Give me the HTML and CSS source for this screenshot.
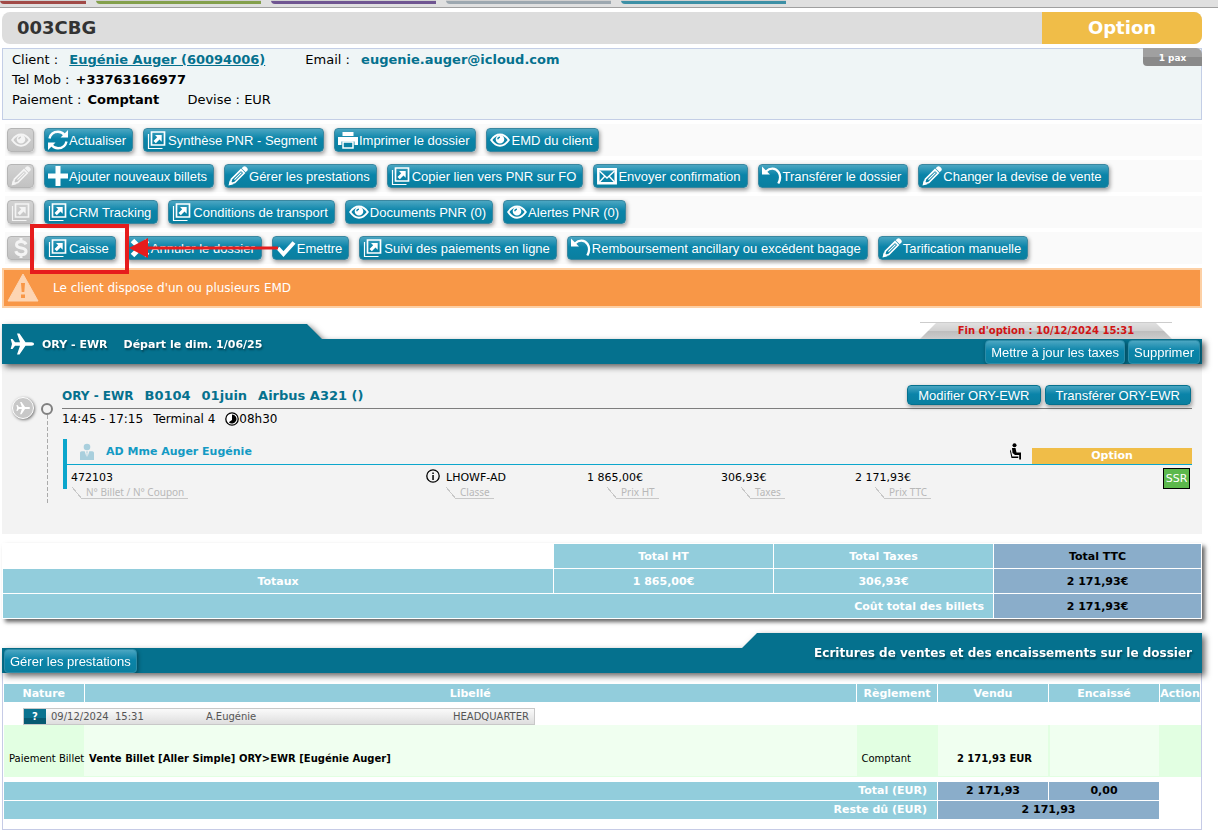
FILE: index.html
```html
<!DOCTYPE html>
<html lang="fr">
<head>
    <meta charset="UTF-8">
    <meta name="viewport" content="width=device-width, initial-scale=1.0">
    <title>Dossier 003CBG</title>
    <link rel="stylesheet" href="styles.css">
</head>
<body>
    <!-- Icones -->
    <svg class="sprite" aria-hidden="true">
        <symbol id="i-eye" viewBox="0 0 20 20">
            <path d="M1.200 10C4 6 7 4.500 10 4.500S16 6 18.800 10C16 14 13 15.800 10 15.800S4 14 1.200 10z" fill="none" stroke="currentColor" stroke-width="2"/>
            <path fill-rule="evenodd" d="M10 5a4.300 4.300 0 1 0 0 8.600A4.300 4.300 0 0 0 10 5zM7.200 9.300A2.800 2.800 0 0 1 10 6.500v1.400a1.400 1.400 0 0 0-1.400 1.400z" fill="currentColor"/>
        </symbol>
        <symbol id="i-refresh" viewBox="0 0 20 20">
            <path d="M1.500 8.500C2.500 4 5.500 1.800 10 1.800c2.800 0 5 1.200 6.500 3.200M18.500 11.500C17.500 16 14.500 18.200 10 18.200c-2.800 0-5-1.200-6.500-3.200" fill="none" stroke="currentColor" stroke-width="2.400"/>
            <path d="M20 0v7.500h-7.500zM0 20v-7.500h7.500z" fill="currentColor"/>
        </symbol>
        <symbol id="i-open" viewBox="0 0 20 20">
            <path d="M4.500 2h13v13h-13z" fill="none" stroke="currentColor" stroke-width="1.700"/>
            <path d="M1.500 4v14.500h14" fill="none" stroke="currentColor" stroke-width="1.200"/>
            <path d="M8 5h6.700v6.700l-2.200-2.200-3.700 3.700L6.500 10.900l3.700-3.700z" fill="currentColor"/>
        </symbol>
        <symbol id="i-print" viewBox="0 0 20 20">
            <path d="M4.500 2h11v4h-11zM0 7h20v8h-3.500v-3.500h-13V15H0z" fill="currentColor"/>
            <path d="M5 12h10v6H5z" fill="none" stroke="currentColor" stroke-width="1.500"/>
        </symbol>
        <symbol id="i-pencil" viewBox="0 0 20 20">
            <path d="M2.200 17.800l1.200-4.600L13 3.800l3.200 3.200-9.400 9.600z" fill="none" stroke="currentColor" stroke-width="1.700"/>
            <path d="M13.700 2.300L15.200.8c.8-.8 2-.8 2.800 0l1.200 1.200c.8.8.8 2 0 2.800l-1.500 1.500zM.5 19.500l1.200-5 3.800 3.800zM6 13.200l7-7 .9.900-7 7z" fill="currentColor"/>
        </symbol>
        <symbol id="i-plus" viewBox="0 0 20 20"><path d="M7.500 0h5v7.500H20v5h-7.500V20h-5v-7.500H0v-5h7.500z" fill="currentColor"/></symbol>
        <symbol id="i-mail" viewBox="0 0 20 20">
            <path d="M1.300 3.300h17.400v14H1.300z" fill="none" stroke="currentColor" stroke-width="2.500"/>
            <path d="M2.500 5l7.500 7 7.500-7M2.500 16l5.500-6M17.500 16L12 10" fill="none" stroke="currentColor" stroke-width="1.400"/>
        </symbol>
        <symbol id="i-undo" viewBox="0 0 20 20">
            <path d="M4 5.500C8 1.500 13.500 1.800 16.500 6c2.200 3.300 2 7.500-.2 11.500" fill="none" stroke="currentColor" stroke-width="2.300"/>
            <path d="M0 .500v8h8z" fill="currentColor"/>
        </symbol>
        <symbol id="i-cross" viewBox="0 0 20 20"><path d="M2.500 2.500l15 15M17.500 2.500l-15 15" stroke="currentColor" stroke-width="5"/></symbol>
        <symbol id="i-check" viewBox="0 0 20 20"><path d="M2 10l5.500 6L18 4.500" fill="none" stroke="currentColor" stroke-width="4"/></symbol>
        <symbol id="i-dollar" viewBox="0 0 20 20">
            <path d="M15 6.300C14 4 12.500 3.500 10 3.500c-3 0-4.500 1.300-4.500 3.200C5.500 11.500 15 8.500 15 13.300c0 2-1.700 3.400-5 3.400-2.700 0-4.500-1-5.200-3.500M10 0v4M10 16.500V20" fill="none" stroke="currentColor" stroke-width="3"/>
        </symbol>
        <symbol id="i-plane" viewBox="0 0 24 24">
            <path d="M24 12c0-1-1-1.700-2.500-1.700h-6L9.500 1.500H7l3 8.800H5L2.500 7H.7L2 12 .7 17h1.800L5 13.700h5l-3 8.800h2.500l6-8.800h6C23 13.700 24 13 24 12z" fill="currentColor"/>
        </symbol>
    </svg>

    <nav class="tabs">
        <a href="#" class="tab tab-red" aria-label="Onglet 1"></a>
        <a href="#" class="tab tab-green" aria-label="Onglet 2"></a>
        <a href="#" class="tab tab-purple" aria-label="Onglet 3"></a>
        <a href="#" class="tab tab-grey" aria-label="Onglet 4"></a>
        <a href="#" class="tab tab-teal" aria-label="Onglet 5"></a>
    </nav>

    <main class="page">
        <header class="title">
            <h1>003CBG</h1>
            <span class="title-status">Option</span>
        </header>

        <section class="client">
            <p>Client : <a href="#">Eugénie Auger (60094006)</a> <span class="client-next">Email : <b class="mail">eugenie.auger@icloud.com</b></span></p>
            <p>Tel Mob : <b class="value">+33763166977</b></p>
            <p>Paiement : <b class="value">Comptant</b> <span class="devise">Devise : EUR</span></p>
            <span class="pax">1 pax</span>
        </section>

        <div class="toolbar">
            <div class="toolbar-row">
                <span class="row-icon"><svg><use href="#i-eye"/></svg></span>
                <button class="btn"><svg><use href="#i-refresh"/></svg>Actualiser</button>
                <button class="btn"><svg><use href="#i-open"/></svg>Synthèse PNR - Segment</button>
                <button class="btn"><svg><use href="#i-print"/></svg>Imprimer le dossier</button>
                <button class="btn"><svg><use href="#i-eye"/></svg>EMD du client</button>
            </div>
            <div class="toolbar-row">
                <span class="row-icon"><svg><use href="#i-pencil"/></svg></span>
                <button class="btn"><svg><use href="#i-plus"/></svg>Ajouter nouveaux billets</button>
                <button class="btn"><svg><use href="#i-pencil"/></svg>Gérer les prestations</button>
                <button class="btn"><svg><use href="#i-open"/></svg>Copier lien vers PNR sur FO</button>
                <button class="btn"><svg><use href="#i-mail"/></svg>Envoyer confirmation</button>
                <button class="btn"><svg><use href="#i-undo"/></svg>Transférer le dossier</button>
                <button class="btn"><svg><use href="#i-pencil"/></svg>Changer la devise de vente</button>
            </div>
            <div class="toolbar-row">
                <span class="row-icon"><svg><use href="#i-open"/></svg></span>
                <button class="btn"><svg><use href="#i-open"/></svg>CRM Tracking</button>
                <button class="btn"><svg><use href="#i-open"/></svg>Conditions de transport</button>
                <button class="btn"><svg><use href="#i-eye"/></svg>Documents PNR (0)</button>
                <button class="btn"><svg><use href="#i-eye"/></svg>Alertes PNR (0)</button>
            </div>
            <div class="toolbar-row">
                <span class="row-icon"><svg><use href="#i-dollar"/></svg></span>
                <button class="btn"><svg><use href="#i-open"/></svg>Caisse</button>
                <button class="btn"><svg><use href="#i-cross"/></svg>Annuler le dossier</button>
                <button class="btn"><svg><use href="#i-check"/></svg>Emettre</button>
                <button class="btn"><svg><use href="#i-open"/></svg>Suivi des paiements en ligne</button>
                <button class="btn"><svg><use href="#i-undo"/></svg>Remboursement ancillary ou excédent bagage</button>
                <button class="btn"><svg><use href="#i-pencil"/></svg>Tarification manuelle</button>
                <!-- Repère rouge autour de Caisse -->
                <svg class="marker" viewBox="0 0 250 54" aria-hidden="true">
                    <path d="M2 3h95v46H2z" fill="none" stroke="#e61c1c" stroke-width="4"/>
                    <path d="M117 25h131" stroke="#e61c1c" stroke-width="3"/>
                    <path d="M99 25l19-10v20z" fill="#e61c1c"/>
                </svg>
            </div>
        </div>

        <div class="alert">
            <svg viewBox="0 0 32 30"><path d="M16 1l15 27H1z" fill="#fdd5b3" stroke="#fdd5b3" stroke-linejoin="round"/><path d="M14 10h4l-.7 9h-2.600zM14 21.500h4v3.500h-4z" fill="#f89747"/></svg>
            Le client dispose d'un ou plusieurs EMD
        </div>

        <section class="segment">
            <div class="band band-left">
                <div class="band-shape">
                    <svg><use href="#i-plane"/></svg>
                    <h2>ORY - EWR</h2>
                    <h2>Départ le dim. 1/06/25</h2>
                    <div class="band-actions">
                        <button class="btn">Mettre à jour les taxes</button>
                        <button class="btn">Supprimer</button>
                    </div>
                </div>
            </div>
            <div class="deadline"><span>Fin d'option : 10/12/2024 15:31</span></div>

            <div class="segment-body">
                <span class="plane-badge"><svg><use href="#i-plane"/></svg></span>
                <div class="timeline"></div>
                <div class="flight">
                    <div class="flight-head">
                        <h3><span class="route">ORY - EWR</span><span>B0104</span><span>01juin</span><span>Airbus A321 ()</span></h3>
                        <button class="btn">Modifier ORY-EWR</button>
                        <button class="btn">Transférer ORY-EWR</button>
                    </div>
                    <p class="flight-times"><span>14:45 - 17:15</span><span>Terminal 4</span><svg viewBox="0 0 14 14"><circle cx="7" cy="7" r="6.200" fill="#fff" stroke="#000" stroke-width="1.300"/><path d="M7 2.500a4.500 4.500 0 1 1-3.200 7.700L7 8z" fill="#000"/></svg>08h30</p>

                    <div class="passenger">
                        <div class="passenger-head">
                            <svg class="person" viewBox="0 0 16 18"><circle cx="8" cy="4" r="3.300"/><path d="M1 10c0-1 .8-1.700 1.700-1.700h3L7.500 14l.2-4-.7-1.500h2L8.300 10l.2 4 1.800-5.700h3c.9 0 1.700.7 1.700 1.700v7H1z"/></svg>
                            <h4>AD Mme Auger Eugénie</h4>
                            <svg class="seat" viewBox="0 0 14 18"><circle cx="4.500" cy="2.200" r="2"/><path d="M2 5h3.500l1 4.500h4.500v7H9.200V12H5L2.500 10zM.6 6.500l1.700 7h6V15H1.500L0 8z"/></svg>
                            <span class="status">Option</span>
                        </div>
                        <div class="ticket">
                            <div class="cell"><span>472103</span><small>N° Billet / N° Coupon</small></div>
                            <div class="cell"><span><svg viewBox="0 0 14 14"><circle cx="7" cy="7" r="6.200" fill="none" stroke="#000" stroke-width="1.300"/><path d="M6.300 3.500h1.500V5H6.300zM6.300 6h1.500v5H6.300z"/></svg>LHOWF-AD</span><small>Classe</small></div>
                            <div class="cell"><span>1 865,00€</span><small>Prix HT</small></div>
                            <div class="cell"><span>306,93€</span><small>Taxes</small></div>
                            <div class="cell"><span>2 171,93€</span><small>Prix TTC</small></div>
                            <button class="ssr">SSR</button>
                        </div>
                    </div>
                </div>
            </div>
        </section>

        <table class="totals">
            <colgroup><col><col class="t-amount"><col class="t-amount"><col class="t-ttc"></colgroup>
            <tr><td class="empty"></td><th>Total HT</th><th>Total Taxes</th><th class="blue">Total TTC</th></tr>
            <tr><th>Totaux</th><td>1 865,00€</td><td>306,93€</td><td class="blue">2 171,93€</td></tr>
            <tr><th colspan="3" class="right">Coût total des billets</th><td class="blue">2 171,93€</td></tr>
        </table>

        <section class="ledger">
            <div class="band band-right">
                <div class="band-shape">
                    <button class="btn">Gérer les prestations</button>
                    <h2>Ecritures de ventes et des encaissements sur le dossier</h2>
                </div>
            </div>
            <div class="ledger-box">
                <table>
                    <colgroup><col class="l-nature"><col><col class="l-mode"><col class="l-amount"><col class="l-amount"><col class="l-action"></colgroup>
                    <thead>
                        <tr><th>Nature</th><th>Libellé</th><th>Règlement</th><th>Vendu</th><th>Encaissé</th><th>Action</th></tr>
                    </thead>
                    <tbody>
                        <tr>
                            <td colspan="6" class="history-cell">
                                <div class="history"><button>?</button><span>09/12/2024 &nbsp;15:31</span><span>A.Eugénie</span><span>HEADQUARTER</span></div>
                            </td>
                        </tr>
                        <tr class="entry">
                            <td class="dark">Paiement Billet</td>
                            <td><b>Vente Billet [Aller Simple] ORY&gt;EWR [Eugénie Auger]</b></td>
                            <td class="dark">Comptant</td>
                            <td class="amount"><b>2 171,93 EUR</b></td>
                            <td class="amount"></td>
                            <td class="dark"></td>
                        </tr>
                    </tbody>
                    <tfoot>
                        <tr class="spacer"><td colspan="6"></td></tr>
                        <tr><th colspan="3" class="right">Total (EUR)</th><td class="blue">2 171,93</td><td class="blue">0,00</td><td></td></tr>
                        <tr><th colspan="3" class="right">Reste dû (EUR)</th><td colspan="2" class="blue">2 171,93</td><td></td></tr>
                    </tfoot>
                </table>
            </div>
        </section>
    </main>
</body>
</html>
```
FILE: styles.css
```css
* {
    box-sizing: border-box;
}

body {
    margin: 0;
    background-color: #fff;
    color: #000;
    font-family: Verdana, "DejaVu Sans", sans-serif;
    font-size: 11px;
}

h1, h2, h3, h4, p {
    margin: 0;
}

button {
    font-family: Arial, "Liberation Sans", sans-serif;
    cursor: pointer;
}

.sprite {
    position: absolute;
    width: 0;
    height: 0;
}

/* Onglets du haut */
.tabs {
    display: flex;
    gap: 10px;
    height: 8px;
    background-color: #e0e0e0;
    border-bottom: 1px solid #a0a0a0;
    overflow: hidden;
}

.tab {
    width: 165px;
    height: 4px;
    border-top: 1px solid #d0d0d0;
    background-color: var(--tab);
    border-bottom-left-radius: 4px;
}

.tab-red { --tab: #a14a47; width: 86px; }
.tab-green { --tab: #84a04c; }
.tab-purple { --tab: #6f5591; }
.tab-grey { --tab: #9da8b0; }
.tab-teal { --tab: #3d90a6; }

.page {
    padding: 4px 16px 4px 2px;
}

.title {
    display: flex;
    height: 32px;
    line-height: 32px;
    background-color: #ddd;
    border-radius: 8px;
    overflow: hidden;
}

.title h1 {
    flex: 1;
    padding-left: 15px;
    font-size: 18px;
    color: #333;
}

.title-status {
    width: 160px;
    background-color: #f0bd48;
    color: #fff;
    font-size: 18px;
    font-weight: bold;
    text-align: center;
}

.client {
    position: relative;
    height: 72px;
    margin-top: 4px;
    padding: 1px 9px;
    border: 1px solid #c3cee6;
    background-color: #eff5f6;
    font-size: 13px;
    line-height: 20px;
}

.client a,
.mail {
    margin-left: 7px;
    color: #05718e;
    font-weight: bold;
}

.client-next {
    margin-left: 36px;
}

.value {
    margin-left: 2px;
}

.devise {
    margin-left: 24px;
}

.pax {
    position: absolute;
    top: -1px;
    right: -1px;
    width: 59px;
    height: 18px;
    border-radius: 0 6px 0 4px;
    background: linear-gradient(#a0a0a0 50%, #8a8a8a 50%);
    color: #fff;
    font-size: 9px;
    font-weight: bold;
    text-align: center;
}

/* Barre d'actions */
.toolbar {
    display: flex;
    flex-direction: column;
    gap: 4px;
    margin: 4px 0 4px 3px;
}

.toolbar-row {
    position: relative;
    display: flex;
    align-items: center;
    gap: 10px;
    height: 32px;
    padding-left: 2px;
    background-color: #fafafa;
}

.btn {
    display: flex;
    align-items: center;
    gap: 1px;
    height: 24px;
    padding: 0 6px 0 3px;
    border: 1px solid #3a87a0;
    border-radius: 4px;
    background: linear-gradient(#4ba6c2, #0a84a9 45%, #0a7f9f);
    box-shadow: 1px 2px 4px rgba(0, 0, 0, 0.4);
    color: #fff;
    font-size: 13px;
    white-space: nowrap;
}

.btn svg,
.row-icon svg {
    width: 20px;
    height: 20px;
    flex: none;
}

.row-icon {
    display: flex;
    align-items: center;
    justify-content: center;
    width: 27px;
    height: 24px;
    border: 1px solid #b5b5b5;
    border-radius: 4px;
    background: linear-gradient(#d2d2d2, #c2c2c2);
    box-shadow: 1px 2px 3px rgba(0, 0, 0, 0.2);
    color: #f4f4f4;
}

.marker {
    position: absolute;
    top: -9px;
    left: 25px;
    width: 250px;
    height: 54px;
}

.alert {
    display: flex;
    align-items: center;
    gap: 14px;
    height: 40px;
    padding-left: 3px;
    border: 2px solid #fdd0a5;
    background-color: #f89747;
    color: #fff;
    font-size: 12px;
}

.alert svg {
    width: 32px;
    height: 30px;
}

/* Bandeaux de section */
.band {
    position: relative;
    z-index: 1;
    filter: drop-shadow(3px 3px 3px rgba(0, 0, 0, 0.6));
}

.band-shape {
    display: flex;
    align-items: center;
    height: 40px;
    background-color: #05718e;
    color: #fff;
}

.band h2 {
    text-shadow: 1px 2px 2px rgba(0, 0, 0, 0.4);
}

.band-left .band-shape {
    gap: 16px;
    padding: 0 2px 0 8px;
    clip-path: polygon(0 0, 305px 0, 320px 15px, 100% 15px, 100% 100%, 0 100%);
}

.band-left svg {
    width: 24px;
    height: 24px;
    margin-right: -8px;
}

.band-left h2 {
    font-size: 11px;
}

.band-actions {
    display: flex;
    align-self: flex-end;
    gap: 3px;
    margin-left: auto;
}

.band .btn {
    padding: 0 5px;
    border-color: #2d8ca8;
}

.deadline {
    position: absolute;
    top: -2px;
    right: 30px;
    z-index: 2;
    width: 252px;
    height: 17px;
    border-top: 1px solid #ccc;
    color: #d01414;
    font-size: 10px;
    font-weight: bold;
    line-height: 16px;
    text-align: center;
}

.deadline span {
    display: block;
    background: linear-gradient(#e0e0e0, #d0d0d0 50%, #bdbdbd 50%, #ccc);
    clip-path: polygon(16px 0, 236px 0, 252px 100%, 0 100%);
}

.segment {
    position: relative;
    margin-top: 16px;
}

.segment-body {
    display: flex;
    height: 170px;
    padding: 18px 10px 0 10px;
    background-color: #f3f3f3;
}

.plane-badge {
    display: flex;
    align-items: center;
    justify-content: center;
    width: 22px;
    height: 22px;
    margin-top: 15px;
    border: 1px solid #fff;
    border-radius: 50%;
    background-color: #c8c8c8;
    box-shadow: 1px 1px 3px rgba(0, 0, 0, 0.5);
    color: #fff;
}

.plane-badge svg {
    width: 14px;
    height: 14px;
}

.timeline {
    width: 12px;
    height: 101px;
    margin: 21px 8px 0 8px;
    background: repeating-linear-gradient(#aaa 0 4px, transparent 4px 6px) no-repeat 5px 12px / 1px 100%;
}

.timeline::before {
    content: "";
    display: block;
    width: 12px;
    height: 12px;
    margin-left: -1px;
    border: 2px solid #808080;
    border-radius: 50%;
}

.timeline,
.timeline::before {
    box-sizing: border-box;
}

.plane-badge,
.timeline {
    flex: none;
}

.flight {
    flex: 1;
}

.flight-head {
    display: flex;
    align-items: center;
    gap: 4px;
    height: 27px;
    padding-right: 1px;
    border-bottom: 1px solid #7d7d7d;
}

.flight-head h3 {
    display: flex;
    flex: 1;
    align-items: baseline;
    gap: 11px;
    color: #05718e;
    font-size: 13px;
}

.flight-head .route {
    font-size: 12px;
}

.flight-head .btn {
    height: 20px;
    padding: 0 10px;
    border-color: #05718e;
}

.flight-times {
    display: flex;
    align-items: center;
    margin-bottom: 10px;
    font-size: 12px;
    line-height: 20px;
}

.flight-times span {
    margin-right: 10px;
}

.flight-times svg,
.cell svg {
    width: 14px;
    height: 14px;
    vertical-align: -2px;
}

.passenger {
    margin-left: 1px;
    background: linear-gradient(#0ba6cc, #0ba6cc) no-repeat 0 0 / 4px 50px;
}

.passenger-head {
    display: flex;
    align-items: center;
    height: 26px;
    margin-left: 4px;
    border-bottom: 1px solid #0ba6cc;
}

.passenger h4 {
    flex: 1;
    color: #149ac4;
    font-size: 11px;
}

.person {
    width: 16px;
    height: 18px;
    margin: 0 11px 0 12px;
    fill: #a9cfdd;
}

.seat {
    width: 14px;
    height: 18px;
    margin-right: 8px;
}

.status {
    align-self: flex-end;
    width: 160px;
    background-color: #f0bd48;
    color: #fff;
    font-weight: bold;
    line-height: 16px;
    text-align: center;
}

.ticket {
    position: relative;
    display: grid;
    grid-template-columns: 355fr 161fr 134fr 134fr 337fr;
    padding: 3px 0 0 8px;
}

.cell > span {
    display: block;
    line-height: 19px;
}

.cell svg {
    margin-right: 6px;
}

.cell small {
    position: relative;
    display: block;
    width: fit-content;
    margin-left: 30px;
    padding: 0 4px;
    border-bottom: 1px solid #c8c8c8;
    color: #b8b8b8;
    font-family: "Noto Sans", sans-serif;
    font-size: 10px;
    line-height: 11px;
}

.cell:first-child small {
    margin-left: 11px;
}

/* trait oblique du libellé */
.cell small::before {
    content: "";
    position: absolute;
    right: 100%;
    bottom: -1px;
    width: 10px;
    height: 12px;
    background: linear-gradient(to top right, transparent 47%, #c8c8c8 47% 53%, transparent 53%);
}

.ssr {
    position: absolute;
    top: 3px;
    right: 2px;
    width: 27px;
    height: 21px;
    padding: 0;
    border: 1px solid #000;
    background-color: #5cb84c;
    color: #fff;
    font-family: Verdana, "DejaVu Sans", sans-serif;
    font-size: 11px;
}

/* Tableaux */
table {
    width: 100%;
    border-collapse: collapse;
    table-layout: fixed;
}

th {
    background-color: #92cddc;
    color: #fff;
}

th,
.totals td {
    padding: 0;
    border: 1px solid #fff;
    font-weight: bold;
    text-align: center;
}

.totals {
    margin-top: 9px;
    background-color: #fff;
    box-shadow: 3px 3px 4px rgba(0, 0, 0, 0.6);
}

.totals th,
.totals td {
    height: 25px;
}

.totals td {
    background-color: #92cddc;
    color: #fff;
}

.totals .empty {
    background-color: #fff;
}

.totals .blue,
.ledger .blue {
    background-color: #8aadca;
    color: #000;
}

th.right,
.totals .right {
    padding-right: 9px;
    text-align: right;
}

.t-amount { width: 220px; }
.t-ttc { width: 208px; }

.ledger {
    margin-top: 14px;
}

.band-right .band-shape {
    justify-content: space-between;
    padding: 0 10px 0 2px;
    clip-path: polygon(0 15px, 740px 15px, 755px 0, 100% 0, 100% 100%, 0 100%);
}

.band-right .btn {
    align-self: flex-end;
}

.band-right h2 {
    font-size: 12px;
}

.ledger-box {
    padding: 10px 0 9px 1px;
    border: 1px solid #c6cbe6;
    border-top: none;
}

.ledger th,
.ledger .blue {
    height: 19px;
    border: 1px solid #fff;
    border-left: none;
    font-weight: bold;
    text-align: center;
}

.ledger th.right {
    padding-right: 10px;
    text-align: right;
}

.ledger td {
    padding: 0;
}

.l-nature { width: 80px; }
.l-mode { width: 81px; }
.l-amount { width: 111px; }
.l-action { width: 41px; }

.ledger .history-cell {
    padding: 5px 0 0 19px;
}

.history {
    display: grid;
    grid-template-columns: 22px 160px 1fr auto;
    width: 512px;
    height: 17px;
    padding-right: 5px;
    border: 1px solid #c8c8c8;
    background: linear-gradient(#fafafa, #dedede);
    color: #555;
    font-size: 10px;
    line-height: 15px;
}

.history span:nth-of-type(1) {
    padding-left: 5px;
}

.history button {
    padding: 0;
    border: none;
    background: linear-gradient(#0a7390 60%, #065a72 60%);
    color: #fff;
    font-family: Verdana, "DejaVu Sans", sans-serif;
    font-size: 10px;
    font-weight: bold;
}

.ledger .entry td {
    height: 51px;
    padding: 16px 0 0 5px;
    background-color: #f0fff0;
    border-bottom: 1px solid #e2ffe2;
    font-size: 10px;
    white-space: nowrap;
}

.ledger .entry .dark {
    background-color: #e2ffe2;
}

.ledger .entry .amount {
    padding: 16px 0 0 4px;
    border-right: 2px solid #e2ffe2;
    text-align: center;
}

.spacer td {
    height: 5px;
}
```
